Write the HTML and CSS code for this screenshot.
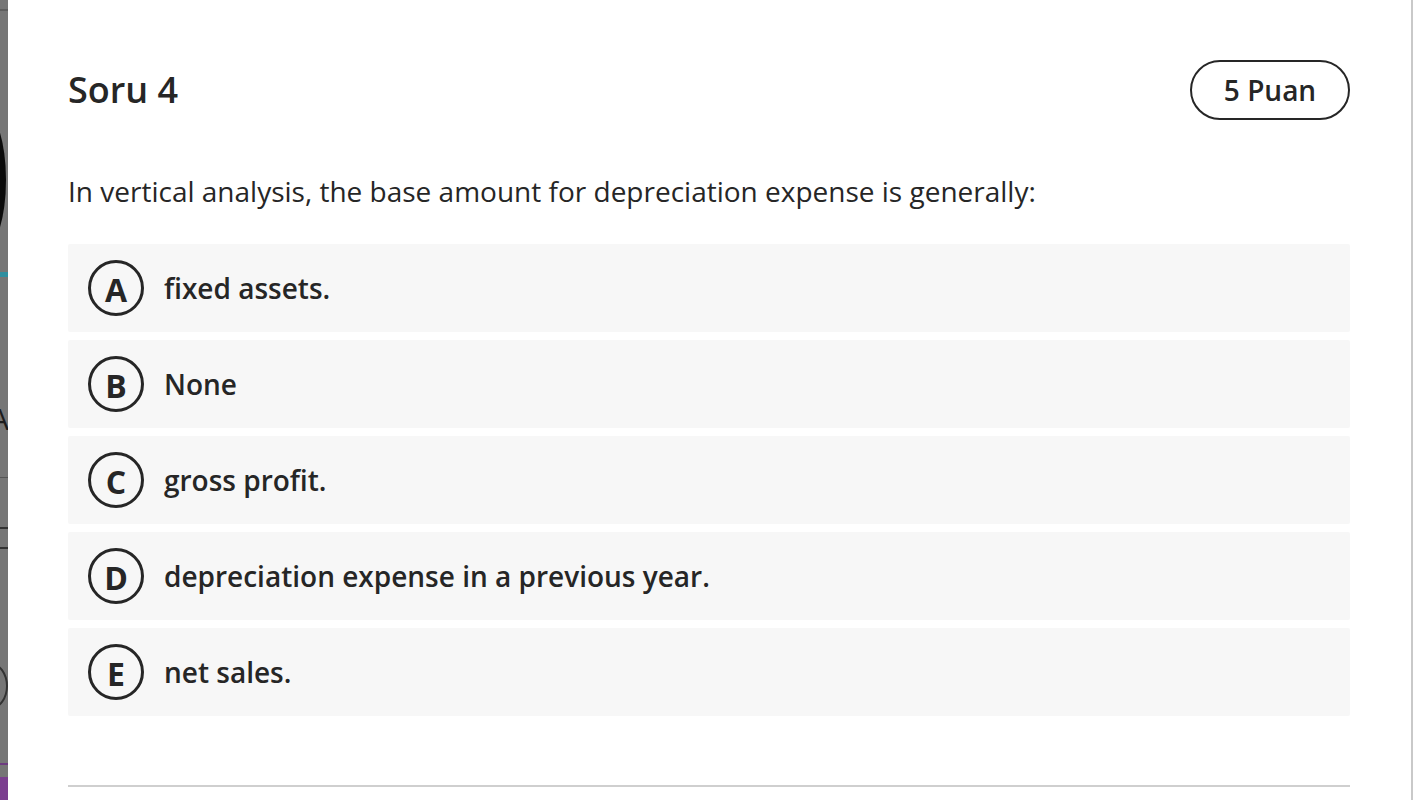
FILE: index.html
```html
<!DOCTYPE html>
<html lang="tr">
<head>
<meta charset="utf-8">
<title>Soru 4</title>
<link rel="stylesheet" href="styles.css">
</head>
<body>
<div class="page">
  <div class="backdrop">
    <div class="bd-topline"></div>
    <div class="bd-circle"></div>
    <div class="bd-teal"></div>
    <div class="bd-letter">A</div>
    <div class="bd-line"></div>
    <div class="bd-c"></div>
    <div class="bd-i"></div>
    <div class="bd-purple-line"></div>
    <div class="bd-purple"></div>
  </div>
  <main class="modal">
    <header class="q-head">
      <h1 class="q-title">Soru 4</h1>
      <span class="q-points">5 Puan</span>
    </header>
    <p class="q-text">In vertical analysis, the base amount for depreciation expense is generally:</p>
    <ul class="options">
      <li class="option"><span class="opt-key">A</span><span class="opt-label">fixed assets.</span></li>
      <li class="option"><span class="opt-key">B</span><span class="opt-label">None</span></li>
      <li class="option"><span class="opt-key">C</span><span class="opt-label">gross profit.</span></li>
      <li class="option"><span class="opt-key">D</span><span class="opt-label">depreciation expense in a previous year.</span></li>
      <li class="option"><span class="opt-key">E</span><span class="opt-label">net sales.</span></li>
    </ul>
    <hr class="divider">
  </main>
  <div class="gutter"></div>
</div>
</body>
</html>
```

FILE: styles.css
```css
html, body {
  margin: 0;
  padding: 0;
  background: #ffffff;
}

body {
  font-family: "Open Sans", "Noto Sans", sans-serif;
  color: #262626;
}

.page {
  display: flex;
  height: 800px;
  overflow: hidden;
}

.backdrop {
  position: relative;
  width: 8px;
  flex: 0 0 8px;
  background: #767676;
  overflow: hidden;
}

.bd-topline {
  position: absolute;
  left: 0;
  top: 9px;
  width: 8px;
  height: 2px;
  background: #5e5e5e;
}

.bd-circle {
  position: absolute;
  left: -40px;
  top: 110px;
  width: 46px;
  height: 140px;
  border-radius: 50%;
  background: #0a0a0a;
}

.bd-teal {
  position: absolute;
  left: 0;
  top: 272px;
  width: 8px;
  height: 5px;
  background: #2f8fa0;
}

.bd-letter {
  position: absolute;
  left: -10px;
  top: 404px;
  font-size: 30px;
  color: #1d1d1d;
  line-height: 1;
}

.bd-line {
  position: absolute;
  left: 0;
  top: 477px;
  width: 8px;
  height: 1px;
  background: #555;
}

.bd-c {
  position: absolute;
  left: -6px;
  top: 527px;
  width: 12px;
  height: 18px;
  border: 2px solid #333;
  border-radius: 2px;
}

.bd-i {
  position: absolute;
  left: -26px;
  top: 663px;
  width: 30px;
  height: 42px;
  border: 2px solid #333;
  border-radius: 50%;
}

.bd-purple-line {
  position: absolute;
  left: 0;
  top: 763px;
  width: 8px;
  height: 2px;
  background: #6d3b80;
}

.bd-purple {
  position: absolute;
  left: 0;
  top: 777px;
  width: 8px;
  height: 23px;
  background: #7b3f8f;
}

.modal {
  box-sizing: border-box;
  width: 1405px;
  flex: 0 0 1405px;
  padding: 60px 61px 0 60px;
  border-right: 2px solid #c9c9c9;
  background: #ffffff;
}

.gutter {
  flex: 1;
  background: #ffffff;
}

.q-head {
  display: flex;
  justify-content: space-between;
  align-items: center;
  height: 60px;
}

.q-title {
  margin: 0;
  font-size: 36px;
  font-weight: 600;
  line-height: 1;
  color: #262626;
}

.q-points {
  box-sizing: border-box;
  display: inline-flex;
  align-items: center;
  justify-content: center;
  width: 160px;
  height: 60px;
  border: 2px solid #262626;
  border-radius: 30px;
  font-size: 28px;
  font-weight: 600;
  color: #262626;
}

.q-text {
  margin: 51px 0 0;
  font-size: 28px;
  line-height: 40px;
  color: #262626;
}

.options {
  list-style: none;
  margin: 33px 0 0;
  padding: 0;
  display: flex;
  flex-direction: column;
  gap: 8px;
}

.option {
  display: flex;
  align-items: center;
  gap: 20px;
  height: 88px;
  padding: 0 20px;
  background: #f7f7f7;
  border-radius: 2px;
}

.opt-key {
  box-sizing: border-box;
  display: inline-flex;
  align-items: center;
  justify-content: center;
  flex: 0 0 56px;
  width: 56px;
  height: 56px;
  border: 3px solid #262626;
  border-radius: 50%;
  font-size: 32px;
  font-weight: 700;
  line-height: 1;
  padding-top: 4px;
  color: #262626;
}

.opt-label {
  font-size: 28px;
  font-weight: 600;
  color: #262626;
}

.divider {
  margin: 69px 0 0;
  border: 0;
  height: 2px;
  background: #cfcfcf;
}
```
